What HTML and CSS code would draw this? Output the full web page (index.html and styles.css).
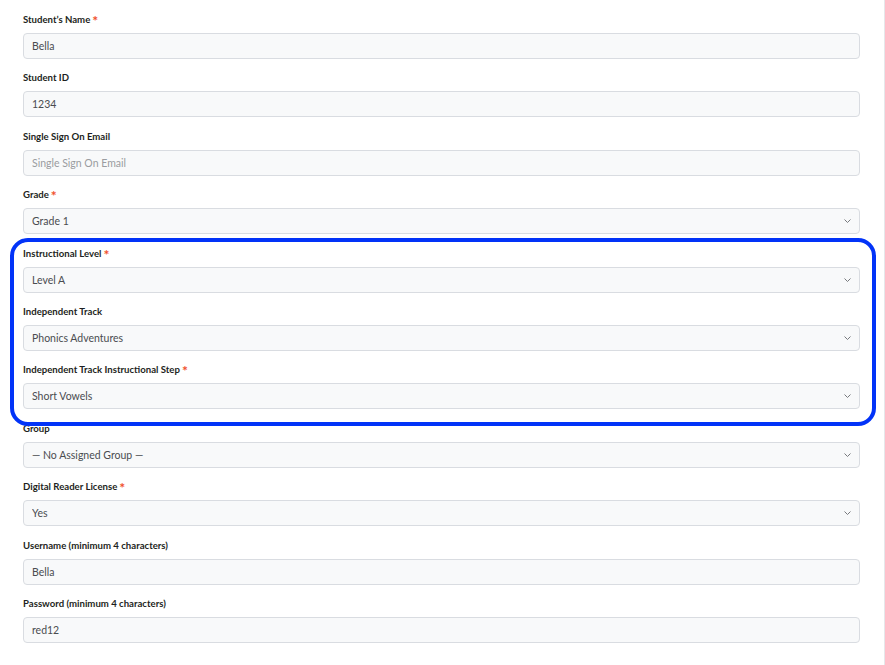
FILE: index.html
```html
<!DOCTYPE html>
<html lang="en">

<head>
    <meta charset="UTF-8">
    <meta name="viewport" content="width=device-width, initial-scale=1.0">
    <title>Edit Student</title>
    <link rel="stylesheet" href="styles.css">
</head>

<body>
    <form class="student-form">
        <div class="field">
            <label>Student’s Name<span class="req">*</span></label>
            <input type="text" value="Bella">
        </div>
        <div class="field">
            <label>Student ID</label>
            <input type="text" value="1234">
        </div>
        <div class="field">
            <label>Single Sign On Email</label>
            <input type="text" placeholder="Single Sign On Email">
        </div>
        <div class="field">
            <label>Grade<span class="req">*</span></label>
            <div class="select">
                <select><option>Grade 1</option></select>
                <svg class="chev" width="7" height="4" viewBox="0 0 7 4"><path d="M0.5 0.5l3 3 3-3" fill="none" stroke="#77797d" stroke-width="1"/></svg>
            </div>
        </div>

        <div class="highlight">
            <div class="field">
                <label>Instructional Level<span class="req">*</span></label>
                <div class="select">
                    <select><option>Level A</option></select>
                    <svg class="chev" width="7" height="4" viewBox="0 0 7 4"><path d="M0.5 0.5l3 3 3-3" fill="none" stroke="#77797d" stroke-width="1"/></svg>
                </div>
            </div>
            <div class="field">
                <label>Independent Track</label>
                <div class="select">
                    <select><option>Phonics Adventures</option></select>
                    <svg class="chev" width="7" height="4" viewBox="0 0 7 4"><path d="M0.5 0.5l3 3 3-3" fill="none" stroke="#77797d" stroke-width="1"/></svg>
                </div>
            </div>
            <div class="field">
                <label>Independent Track Instructional Step<span class="req">*</span></label>
                <div class="select">
                    <select><option>Short Vowels</option></select>
                    <svg class="chev" width="7" height="4" viewBox="0 0 7 4"><path d="M0.5 0.5l3 3 3-3" fill="none" stroke="#77797d" stroke-width="1"/></svg>
                </div>
            </div>
        </div>

        <div class="field">
            <label>Group</label>
            <div class="select">
                <select><option>— No Assigned Group —</option></select>
                <svg class="chev" width="7" height="4" viewBox="0 0 7 4"><path d="M0.5 0.5l3 3 3-3" fill="none" stroke="#77797d" stroke-width="1"/></svg>
            </div>
        </div>
        <div class="field">
            <label>Digital Reader License<span class="req">*</span></label>
            <div class="select">
                <select><option>Yes</option></select>
                <svg class="chev" width="7" height="4" viewBox="0 0 7 4"><path d="M0.5 0.5l3 3 3-3" fill="none" stroke="#77797d" stroke-width="1"/></svg>
            </div>
        </div>
        <div class="field">
            <label>Username (minimum 4 characters)</label>
            <input type="text" value="Bella">
        </div>
        <div class="field">
            <label>Password (minimum 4 characters)</label>
            <input type="text" value="red12">
        </div>
    </form>
</body>

</html>
```

FILE: styles.css
```css
body {
    margin: 0;
    background: #fff;
    font-family: 'Lato', 'Open Sans', sans-serif;
}

.student-form {
    box-sizing: border-box;
    width: 885px;
    min-height: 665px;
    padding: 13px 24px 0 23px;
    border-right: 1px solid #e6e7ea;
    display: flex;
    flex-direction: column;
    gap: 12.4px;
}

.highlight {
    position: relative;
    display: flex;
    flex-direction: column;
    gap: 12.4px;
}

/* blue annotation frame round the three level fields */
.highlight::after {
    content: "";
    position: absolute;
    top: -9px;
    left: -13px;
    right: -16px;
    bottom: -17px;
    border: 4px solid #0233f8;
    border-radius: 18px;
    pointer-events: none;
}

.field {
    display: flex;
    flex-direction: column;
}

.field label {
    font-size: 9.6px;
    line-height: 14px;
    font-weight: 700;
    color: #1d1f22;
    margin-bottom: 6px;
}

.req {
    display: inline-block;
    position: relative;
    top: 3px;
    margin-left: 2px;
    color: #f0502c;
    font-size: 14px;
    line-height: 10px;
}

input,
select {
    box-sizing: border-box;
    width: 100%;
    height: 26px;
    margin: 0;
    padding: 0 8px;
    border: 1px solid #d9dce1;
    border-radius: 4px;
    background: #f8f9fa;
    font-family: 'Lato', sans-serif;
    font-size: 10.5px;
    color: #4a4c50;
    outline: none;
}

input::placeholder {
    color: #9a9ca0;
}

select {
    -webkit-appearance: none;
    appearance: none;
}

.select {
    position: relative;
}

.chev {
    position: absolute;
    right: 9px;
    top: 11px;
}
```
